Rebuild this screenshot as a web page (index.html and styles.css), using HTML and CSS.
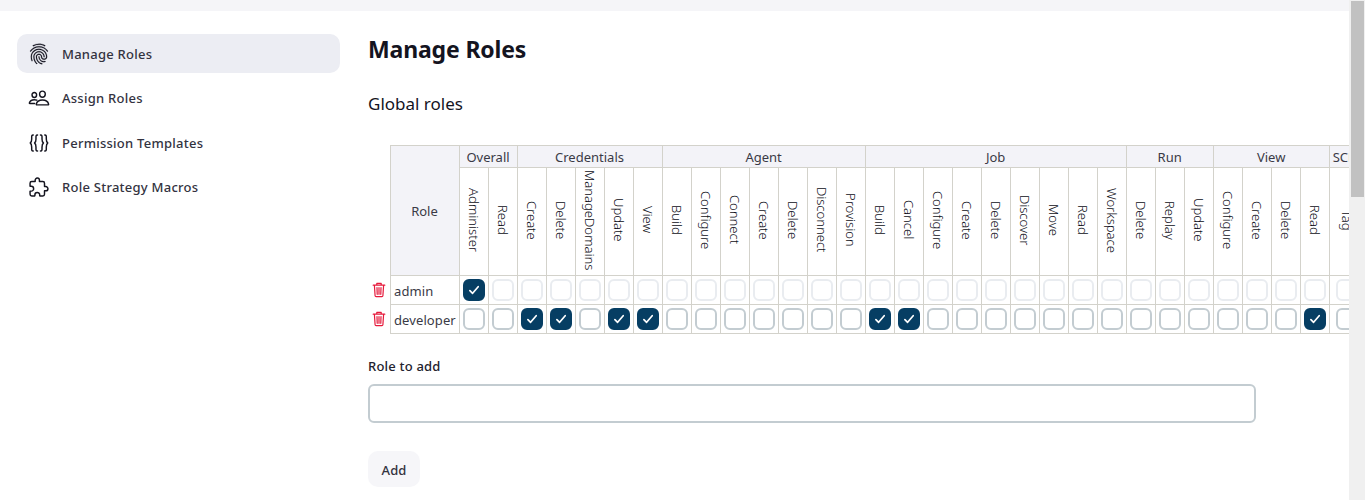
FILE: index.html
```html
<!DOCTYPE html>
<html lang="en">
<head>
<meta charset="utf-8">
<title>Manage Roles</title>
<link rel="stylesheet" href="styles.css">
</head>
<body>
<div class="viewport">
  <div class="page">
    <div class="breadcrumbs"></div>
    <div class="body">
      <nav class="tasks">
        <a class="task task-active"><svg class="icon" viewBox="0 0 512 512"><path class="solid" d="M390.42 75.28a10.45 10.45 0 01-5.32-1.44C340.72 50.08 302.35 40 256.35 40c-45.77 0-89.23 11.28-128.76 33.84C122 77 115.11 74.8 111.87 69a12.4 12.4 0 014.63-16.32A281.81 281.81 0 01256.35 16c49.23 0 92.23 11.28 139.39 36.48a12 12 0 014.85 16.08 11.3 11.3 0 01-10.17 6.72zm-330.79 126a11.73 11.73 0 01-6.7-2.16 12.26 12.26 0 01-2.78-16.8c22.89-33.6 52-60 86.69-78.48 72.58-38.84 165.51-39.12 238.32-.24 34.68 18.48 63.8 44.64 86.69 78a12.29 12.29 0 01-2.78 16.8 11.26 11.26 0 01-16.18-2.88c-20.8-30.24-47.16-54-78.36-70.56-66.34-35.28-151.18-35.28-217.29.24-31.44 16.8-57.79 40.8-78.59 71a10 10 0 01-9.02 5.08zM204.1 491a10.66 10.66 0 01-8.09-3.6C175.9 466.48 165 453 149.55 424c-16-29.52-24.27-65.52-24.27-104.16 0-71.28 58.71-129.36 130.84-129.36S387 248.56 387 319.84a11.56 11.56 0 11-23.11 0c0-58.08-48.32-105.36-107.72-105.36S148.4 261.76 148.4 319.84c0 34.56 7.39 66.48 21.49 92.4 14.8 27.6 25 39.36 42.77 58.08a12.67 12.67 0 010 17 12.44 12.44 0 01-8.56 3.68zm165.75-44.4c-27.51 0-51.78-7.2-71.66-21.36a129.1 129.1 0 01-55-105.36 11.57 11.57 0 1123.12 0 104.28 104.28 0 0044.84 85.44c16.41 11.52 35.6 17 58.72 17a147.41 147.41 0 0024-2.4c6.24-1.2 12.25 3.12 13.4 9.84a11.92 11.92 0 01-9.47 13.92 152.28 152.28 0 01-27.95 2.88zM323.38 496a13 13 0 01-3-.48c-36.76-10.56-60.8-24.72-86.06-50.4-32.36-33.36-50.16-77.76-50.16-125.28 0-38.88 31.9-70.56 71.19-70.56s71.2 31.68 71.2 70.56c0 25.68 21.5 46.56 48.08 46.56s48.08-20.88 48.08-46.56c0-90.48-75.13-163.92-167.59-163.92-65.65 0-125.75 37.92-152.79 96.72-9 19.44-13.64 42.24-13.64 67.2 0 18.72 1.61 48.24 15.48 86.64 2.32 6.24-.69 13.2-6.7 15.36a11.34 11.34 0 01-14.79-7 276.39 276.39 0 01-16.88-95c0-28.8 5.32-55 15.72-77.76 30.75-67 98.94-110.4 173.6-110.4 105.18 0 190.71 84.24 190.71 187.92 0 38.88-31.9 70.56-71.2 70.56s-71.2-31.68-71.2-70.56C303.5 293.92 282 273 255.42 273s-48.08 20.88-48.08 46.56c0 41 15.26 79.44 43.23 108.24 22 22.56 43 35 75.59 44.16 6.24 1.68 9.71 8.4 8.09 14.64a11.39 11.39 0 01-10.87 9.4z"/></svg><span>Manage Roles</span></a>
        <a class="task"><svg class="icon" viewBox="0 0 512 512"><g class="line"><path d="M402 168c-2.93 40.67-33.1 72-66 72s-63.12-31.32-66-72c-3-42.31 26.37-72 66-72s69 30.46 66 72z"/><path d="M336 304c-65.17 0-127.84 32.37-143.54 95.41-2.08 8.34 3.15 16.59 11.72 16.59h263.65c8.57 0 13.77-8.25 11.72-16.59C463.85 335.36 401.18 304 336 304z"/><path d="M200 185.94c-2.34 32.48-26.72 58.06-53 58.06s-50.7-25.57-53-58.06C91.61 152.15 115.34 128 147 128s55.39 24.77 53 57.94z"/><path d="M206 306c-18.05-8.27-37.93-11.45-59-11.45-52 0-102.1 25.85-114.65 76.2-1.65 6.66 2.53 13.25 9.37 13.25H154"/></g></svg><span>Assign Roles</span></a>
        <a class="task"><svg class="icon" viewBox="0 0 512 512"><g class="line brace"><path d="M122 68c-44 0-36 42-36 92s-4 80-34 96c30 16 34 46 34 96s-8 92 36 92"/><path d="M222 68c-44 0-36 42-36 92s-4 80-34 96c30 16 34 46 34 96s-8 92 36 92"/><path d="M290 68c44 0 36 42 36 92s4 80 34 96c-30 16-34 46-34 96s8 92-36 92"/><path d="M390 68c44 0 36 42 36 92s4 80 34 96c-30 16-34 46-34 96s8 92-36 92"/></g></svg><span>Permission Templates</span></a>
        <a class="task"><svg class="icon" viewBox="0 0 512 512"><g class="line"><path d="M413.66 246.1H386a2 2 0 01-2-2v-77.24A38.86 38.86 0 00345.14 128H267.9a2 2 0 01-2-2V98.34c0-27.14-21.5-49.86-48.64-50.33a49.53 49.53 0 00-50.4 49.51V126a2 2 0 01-2 2H87.62A39.74 39.74 0 0048 167.62V238a2 2 0 002 2h26.91c29.37 0 53.68 25.48 54.09 54.85.42 29.87-23.51 57.15-53.29 57.15H50a2 2 0 00-2 2v70.38A39.74 39.74 0 0087.62 464H158a2 2 0 002-2v-20.93c0-30.28 24.75-56.35 55-57.06 30.1-.7 57 20.31 57 50.28V462a2 2 0 002 2h71.14A38.86 38.86 0 00384 425.14v-78a2 2 0 012-2h28.48c27.63 0 49.52-22.67 49.52-50.4s-23.2-48.64-50.34-48.64z"/></g></svg><span>Role Strategy Macros</span></a>
      </nav>
      <main class="main">
        <h1 class="title">Manage Roles</h1>
        <h2 class="section">Global roles</h2>
        <table class="roles">
          <colgroup><col class="c-del"><col class="c-role"><col span="30" class="c-perm"><col class="c-scm"></colgroup>
          <tr class="groups">
            <td class="del" rowspan="2"></td>
            <th rowspan="2">Role</th><th colspan="2">Overall</th><th colspan="5">Credentials</th><th colspan="7">Agent</th><th colspan="9">Job</th><th colspan="3">Run</th><th colspan="4">View</th><th class="scm">SCM</th>
          </tr>
          <tr class="perms">
            <td><span>Administer</span></td><td><span>Read</span></td>
            <td><span>Create</span></td><td><span>Delete</span></td><td><span>ManageDomains</span></td><td><span>Update</span></td><td><span>View</span></td>
            <td><span>Build</span></td><td><span>Configure</span></td><td><span>Connect</span></td><td><span>Create</span></td><td><span>Delete</span></td><td><span>Disconnect</span></td><td><span>Provision</span></td>
            <td><span>Build</span></td><td><span>Cancel</span></td><td><span>Configure</span></td><td><span>Create</span></td><td><span>Delete</span></td><td><span>Discover</span></td><td><span>Move</span></td><td><span>Read</span></td><td><span>Workspace</span></td>
            <td><span>Delete</span></td><td><span>Replay</span></td><td><span>Update</span></td>
            <td><span>Configure</span></td><td><span>Create</span></td><td><span>Delete</span></td><td><span>Read</span></td>
            <td><span>Tag</span></td>
          </tr>
          <tr class="role muted">
            <td class="del"><svg class="trash" viewBox="0 0 14 16"><path d="M2.4 3.4l.7 10.3q.1.9 1 .9h5.8q.9 0 1-.9l.7-10.3M1.2 3.2h11.6M4.8 3V1.4h4.4V3M5 5.5l.2 6.8M7 5.5v6.8M9 5.5l-.2 6.8"/></svg></td>
            <td class="name">admin</td>
            <td><input type="checkbox" checked></td><td><input type="checkbox"></td>
            <td><input type="checkbox"></td><td><input type="checkbox"></td><td><input type="checkbox"></td><td><input type="checkbox"></td><td><input type="checkbox"></td>
            <td><input type="checkbox"></td><td><input type="checkbox"></td><td><input type="checkbox"></td><td><input type="checkbox"></td><td><input type="checkbox"></td><td><input type="checkbox"></td><td><input type="checkbox"></td>
            <td><input type="checkbox"></td><td><input type="checkbox"></td><td><input type="checkbox"></td><td><input type="checkbox"></td><td><input type="checkbox"></td><td><input type="checkbox"></td><td><input type="checkbox"></td><td><input type="checkbox"></td><td><input type="checkbox"></td>
            <td><input type="checkbox"></td><td><input type="checkbox"></td><td><input type="checkbox"></td>
            <td><input type="checkbox"></td><td><input type="checkbox"></td><td><input type="checkbox"></td><td><input type="checkbox"></td>
            <td><input type="checkbox"></td>
          </tr>
          <tr class="role">
            <td class="del"><svg class="trash" viewBox="0 0 14 16"><path d="M2.4 3.4l.7 10.3q.1.9 1 .9h5.8q.9 0 1-.9l.7-10.3M1.2 3.2h11.6M4.8 3V1.4h4.4V3M5 5.5l.2 6.8M7 5.5v6.8M9 5.5l-.2 6.8"/></svg></td>
            <td class="name">developer</td>
            <td><input type="checkbox"></td><td><input type="checkbox"></td>
            <td><input type="checkbox" checked></td><td><input type="checkbox" checked></td><td><input type="checkbox"></td><td><input type="checkbox" checked></td><td><input type="checkbox" checked></td>
            <td><input type="checkbox"></td><td><input type="checkbox"></td><td><input type="checkbox"></td><td><input type="checkbox"></td><td><input type="checkbox"></td><td><input type="checkbox"></td><td><input type="checkbox"></td>
            <td><input type="checkbox" checked></td><td><input type="checkbox" checked></td><td><input type="checkbox"></td><td><input type="checkbox"></td><td><input type="checkbox"></td><td><input type="checkbox"></td><td><input type="checkbox"></td><td><input type="checkbox"></td><td><input type="checkbox"></td>
            <td><input type="checkbox"></td><td><input type="checkbox"></td><td><input type="checkbox"></td>
            <td><input type="checkbox"></td><td><input type="checkbox"></td><td><input type="checkbox"></td><td><input type="checkbox" checked></td>
            <td><input type="checkbox"></td>
          </tr>
        </table>
        <label class="label" for="role">Role to add</label>
        <input class="field" id="role" type="text">
        <button class="add" type="button">Add</button>
      </main>
    </div>
  </div>
  <div class="scrollbar"><div class="thumb"></div></div>
</div>
</body>
</html>
```
FILE: styles.css
```css
* { box-sizing: border-box; }
body { margin: 0; background: #fff; color: #14141f; font-family: "Noto Sans", "Open Sans", sans-serif; font-size: 13px; }
.viewport { display: flex; height: 500px; overflow: hidden; }
.page { flex: 1; min-width: 0; overflow: hidden; }
.breadcrumbs { height: 11px; background: #f5f5f8; }
.body { display: flex; }
.tasks { flex: none; display: flex; flex-direction: column; gap: 5.5px; width: 340px; padding: 23px 0 0 17px; }
.task { display: flex; align-items: center; gap: 12px; height: 39px; padding-left: 11px; border-radius: 10px; font-weight: 500; font-size: 13px; letter-spacing: 0.25px; color: #33333f; }
.task-active { background: #ecedf3; }
.icon { width: 22px; height: 22px; flex: none; }
.solid { fill: #14141f; stroke: #14141f; stroke-width: 5; }
.line { fill: none; stroke: #14141f; stroke-width: 34; stroke-linecap: round; stroke-linejoin: round; }
.main { flex: none; width: 1100px; padding: 22px 0 0 28px; }
.title { margin: 0; font-size: 23px; font-weight: 700; line-height: 32px; letter-spacing: -0.15px; }
.section { margin: 25px 0 0; font-size: 17px; font-weight: 400; line-height: 28px; }
.roles { margin-top: 27px; table-layout: fixed; width: 996px; border-collapse: collapse; color: #3a3a46; }
.c-del { width: 22px; }
.c-role { width: 69px; }
.c-perm { width: 29px; }
.c-scm { width: 35px; }
.roles td, .roles th { padding: 0; border: 1px solid #d3d2cb; text-align: center; vertical-align: middle; font-weight: 400; line-height: 18px; }
.roles th { background: #f3f3f8; }
.roles .scm { padding-right: 1px; }
.roles .del { border-width: 0; text-align: left; }
.groups { height: 22px; }
.perms { height: 108px; }
.roles .perms td { padding: 1px 0 0; }
.perms span { display: inline-block; writing-mode: vertical-rl; line-height: 18px; font-weight: 300; color: #0c0c16; white-space: nowrap; }
.role { height: 29px; }
.roles .name { text-align: left; padding: 2px 0 0 3.5px; letter-spacing: 0.1px; }
.roles input { appearance: none; display: block; width: 22px; height: 22px; margin: 0 auto; border: 2px solid #c3ccd1; border-radius: 6px; background: #fff; }
.muted input { border-color: #e9ecf0; }
.roles input:checked { border-color: #063e63; background: #063e63 url("data:image/svg+xml,%3Csvg xmlns='http://www.w3.org/2000/svg' viewBox='0 0 22 22'%3E%3Cpath d='M6.9 11.6l2.7 2.7 5.6-6.6' fill='none' stroke='white' stroke-width='1.7' stroke-linecap='round' stroke-linejoin='round'/%3E%3C/svg%3E") border-box center / 22px 22px no-repeat; }
.trash { display: block; width: 14px; height: 16px; margin-left: 4px; fill: none; stroke: #e6193b; stroke-width: 1.2; stroke-linecap: round; stroke-linejoin: round; }
.label { display: block; margin-top: 22px; font-size: 13px; font-weight: 500; line-height: 20px; letter-spacing: 0.2px; color: #22222e; }
.field { display: block; width: 888px; height: 39px; margin: 8px 0 0; border: 2px solid #c3ccd1; border-radius: 6px; background: #fff; }
.add { display: block; width: 52px; height: 36px; margin: 28px 0 0; padding: 2px 0 0; border: 0; border-radius: 10px; background: #f6f6f9; color: #33333f; font: 500 13px "Noto Sans", sans-serif; letter-spacing: 0.1px; }
.scrollbar { flex: none; width: 16px; padding: 1px 1px 0 2px; background: #f0f0f0; }
.thumb { height: 196px; background: #c1c1c1; }
```
